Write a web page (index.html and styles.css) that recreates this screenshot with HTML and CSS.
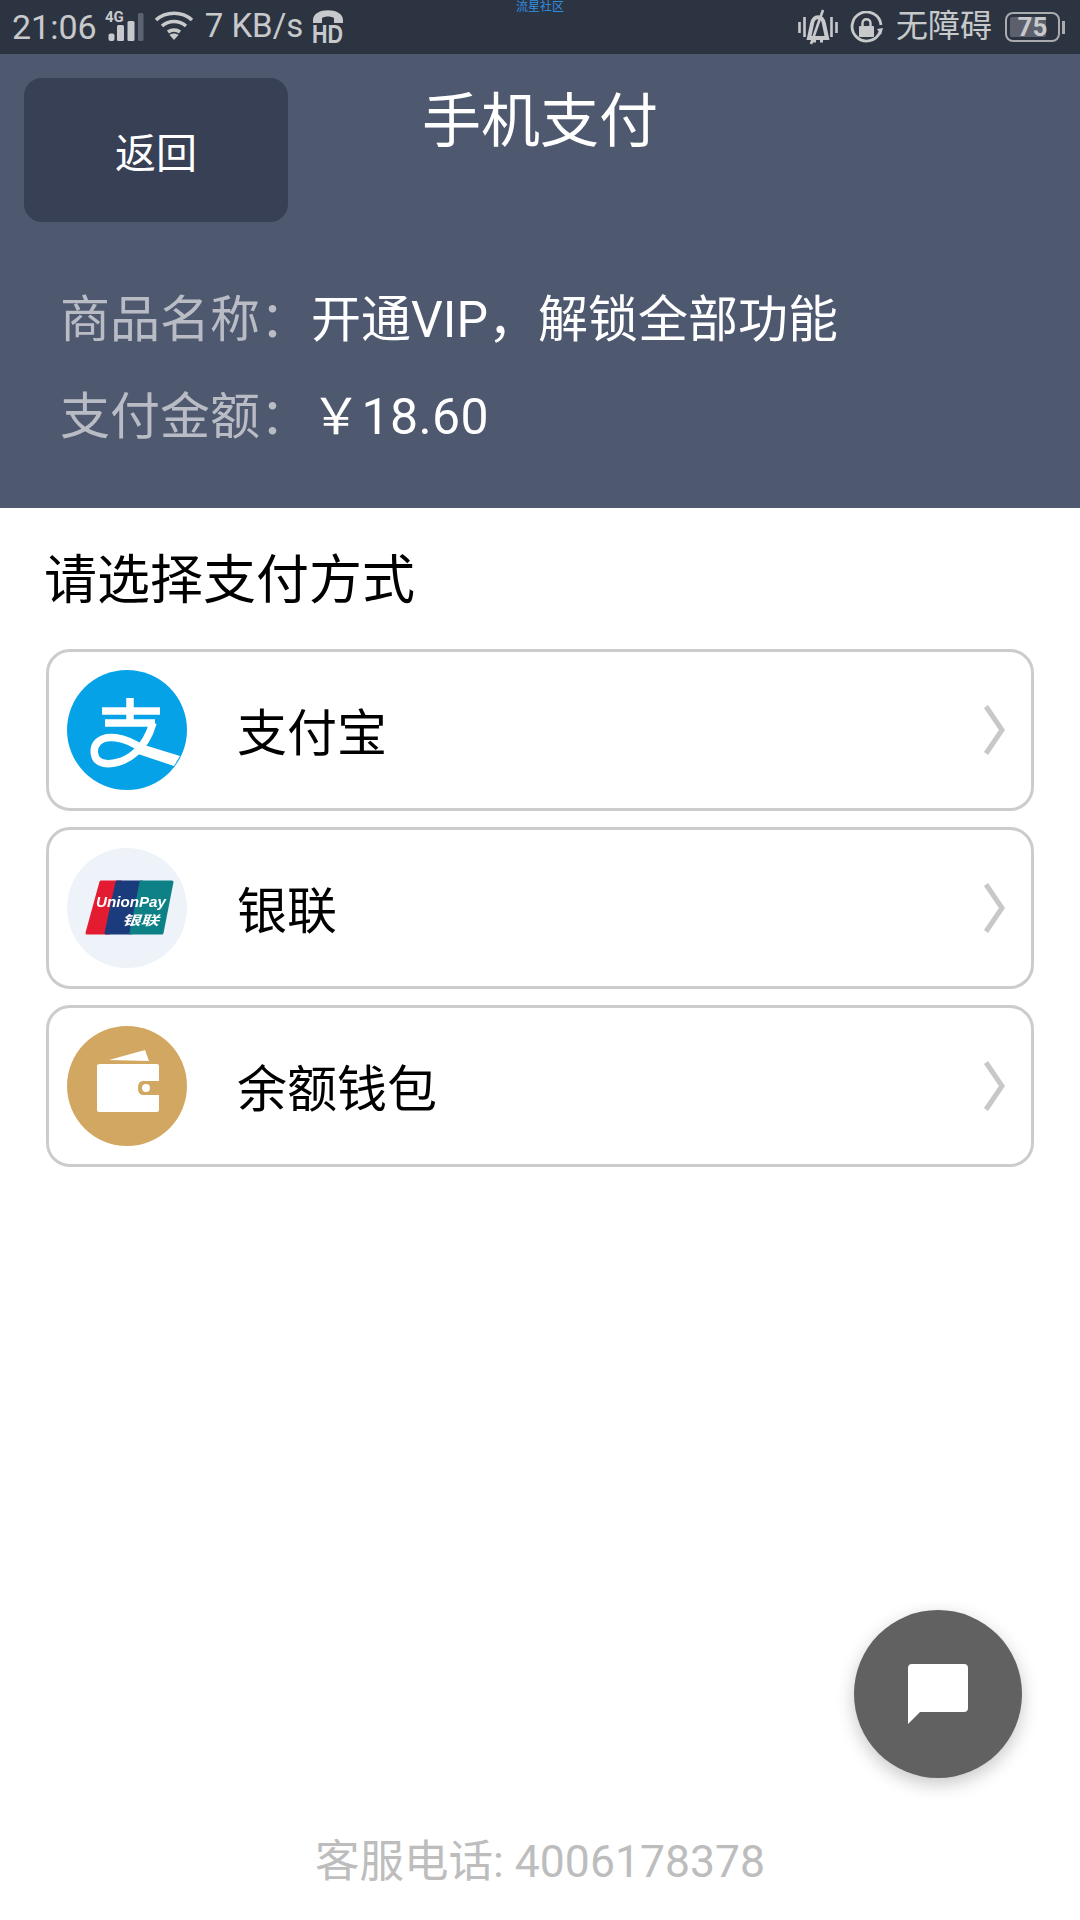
FILE: index.html
```html
<!DOCTYPE html>
<html lang="zh">
<head>
<meta charset="utf-8">
<title>手机支付</title>
<link rel="stylesheet" href="styles.css">
</head>
<body>
<div class="page">
  <div class="status">
    <div class="status-group">
      <span class="time">21:06</span>
      <svg class="ic-signal" viewBox="0 0 40 32" width="40" height="32"><text x="0" y="12" class="net">4G</text><rect x="3.500" y="23.500" width="6" height="7.500" rx="2" fill="#c8c9cb"/><rect x="12" y="15" width="7" height="16" rx="1.500" fill="#c8c9cb"/><rect x="22.500" y="11" width="7" height="20" rx="1.500" fill="#c8c9cb"/><rect x="33" y="3" width="5.500" height="28" rx="1.500" fill="#5d6370"/></svg>
      <svg class="ic-wifi" viewBox="0 0 40 32" width="40" height="32" fill="none" stroke="#c8c9cb" stroke-width="3.600"><path d="M2 11 C12 2 28 2 38 11"/><path d="M8 17 C15 11 25 11 32 17"/><path d="M14 23 C17.500 20.500 22.500 20.500 26 23"/><path d="M15.500 26 L20 31 L24.500 26 C22 24 18 24 15.500 26Z" fill="#c8c9cb" stroke="none"/></svg>
      <span class="speed">7 KB/s</span>
      <svg class="ic-hd" viewBox="0 0 32 34" width="32" height="34"><path d="M1 10 C1 -3 31 -3 31 10 L31 13 L22 13 L22 8 C19 6 13 6 10 8 L10 13 L1 13Z" fill="#c8c9cb"/><text x="0" y="33" class="hd" textLength="31" lengthAdjust="spacingAndGlyphs">HD</text></svg>
    </div>
    <span class="brand">流星社区</span>
    <div class="status-group right">
      <svg class="ic-bell" viewBox="0 0 40 36" width="40" height="36" fill="none" stroke="#c8c9cb"><path d="M1.500 13 V24 M6.500 8 V28 M33.500 8 V28 M38.500 13 V24" stroke-width="2.600"/><path d="M11 29 L14 15 C15 6 25 6 26 15 L29 29Z" stroke-width="4"/><path d="M15 32 H18 M22 32 H25" stroke-width="3"/><path d="M25 1 L13 35" stroke-width="2.600"/></svg>
      <svg class="ic-lock" viewBox="0 0 33 33" width="33" height="33" fill="none"><path d="M30 21 A14.500 14.500 0 1 1 31 14" stroke="#c8c9cb" stroke-width="2.800"/><path d="M27 18 L31 24 L33 17Z" fill="#c8c9cb"/><rect x="9" y="15" width="15" height="11" rx="1" fill="#c8c9cb"/><path d="M12.500 15 V12 C12.500 7 20.500 7 20.500 12 V15" stroke="#c8c9cb" stroke-width="2.400"/></svg>
      <span class="a11y">无障碍</span>
      <div class="battery"><div class="battery-body"><div class="battery-fill"></div><span class="battery-num">75</span></div><div class="battery-tip"></div></div>
    </div>
  </div>

  <header class="hero">
    <div class="hero-top">
      <button class="back">返回</button>
      <h1 class="title">手机支付</h1>
      <span class="spacer"></span>
    </div>
    <div class="info"><span class="label">商品名称：</span><span class="value">开通VIP，解锁全部功能</span></div>
    <div class="info"><span class="label">支付金额：</span><span class="value price">￥18.60</span></div>
  </header>

  <main class="main">
    <h2 class="choose">请选择支付方式</h2>
    <div class="methods">
      <div class="method">
        <svg class="logo" viewBox="0 0 120 120"><defs><clipPath id="c1"><circle cx="60" cy="60" r="60"/></clipPath></defs><circle cx="60" cy="60" r="60" fill="#06a2e8"/><g clip-path="url(#c1)"><g fill="none" stroke="#fff" stroke-width="7.500"><path d="M35 41 H93 M38 53 H88 M63 28 V53"/><path d="M86 53 C82 67 76 76 68 83 C58 92 44 95 36 93 C26 91 25 78 31 72 C38 65 56 65 77 80"/></g><path d="M74 74 L113 86 L107 96 L68 83Z" fill="#fff"/></g></svg>
        <span class="method-name">支付宝</span>
        <svg class="chevron" viewBox="0 0 24 50" width="24" height="50" fill="none"><path d="M3 1.500 L19 25 L3 48.500" stroke="#c8c8c8" stroke-width="5"/></svg>
      </div>
      <div class="method">
        <svg class="logo" viewBox="0 0 120 120"><circle cx="60" cy="60" r="60" fill="#eef2f9"/><g class="logo-soft"><path d="M34 34 H54 L42 85 H20 Z" fill="#e31c32" stroke="#e31c32" stroke-width="3" stroke-linejoin="round"/><path d="M50 34 H75 L64 85 H39 Z" fill="#1a3b7c" stroke="#1a3b7c" stroke-width="3" stroke-linejoin="round"/><path d="M74 34 H105 L95 85 H64 Z" fill="#0d8185" stroke="#0d8185" stroke-width="3" stroke-linejoin="round"/><text x="29" y="59" class="up" textLength="70" lengthAdjust="spacingAndGlyphs">UnionPay</text><text x="55" y="77" class="up-cn" textLength="37" lengthAdjust="spacingAndGlyphs">银联</text></g></svg>
        <span class="method-name">银联</span>
        <svg class="chevron" viewBox="0 0 24 50" width="24" height="50" fill="none"><path d="M3 1.500 L19 25 L3 48.500" stroke="#c8c8c8" stroke-width="5"/></svg>
      </div>
      <div class="method">
        <svg class="logo" viewBox="0 0 120 120"><circle cx="60" cy="60" r="60" fill="#d2a761"/><path d="M42 34 L78 24 L82 35Z" fill="#fff"/><path d="M33 38 H90 Q92 38 92 40 V55 H76 Q71 55 71 62 Q71 69 76 69 H92 V84 Q92 86 90 86 H33 Q30 86 30 84 V40 Q30 38 33 38Z" fill="#fff"/><circle cx="79" cy="62" r="4" fill="#fff"/></svg>
        <span class="method-name">余额钱包</span>
        <svg class="chevron" viewBox="0 0 24 50" width="24" height="50" fill="none"><path d="M3 1.500 L19 25 L3 48.500" stroke="#c8c8c8" stroke-width="5"/></svg>
      </div>
    </div>
  </main>

  <footer class="footer">客服电话: 4006178378</footer>

  <button class="fab" aria-label="消息"><svg viewBox="0 0 60 60" width="60" height="60"><path d="M4 0 H56 Q60 0 60 4 V44 Q60 48 56 48 H12 L0 60 V4 Q0 0 4 0Z" fill="#fff"/></svg></button>
</div>
</body>
</html>
```
FILE: styles.css
```css
* { box-sizing: border-box; }
html, body { margin: 0; padding: 0; }
body {
  width: 1080px;
  height: 1920px;
  background: #fff;
  overflow: hidden;
  font-family: Roboto, "Noto Sans CJK SC", sans-serif;
}
.page {
  position: relative;
  width: 1080px;
  height: 1920px;
  display: flex;
  flex-direction: column;
}

/* status bar */
.status {
  position: relative;
  height: 54px;
  flex: none;
  background: #2c3442;
  color: #c8c9cb;
  display: flex;
  align-items: center;
  justify-content: space-between;
  padding: 0 15px 0 12px;
}
.status-group { display: flex; align-items: center; }
.time { font-size: 34px; line-height: 54px; white-space: nowrap; }
.ic-signal { margin-left: 8px; margin-top: -3px; overflow: visible; }
.net { font: 700 15px Roboto, sans-serif; fill: #c8c9cb; }
.ic-wifi { margin-left: 9px; margin-top: -4px; }
.speed { font-size: 33px; line-height: 54px; margin-left: 11px; margin-top: -3px; white-space: nowrap; }
.ic-hd { margin-left: 9px; overflow: visible; }
.hd { font: 700 26px "Liberation Sans", sans-serif; fill: #c8c9cb; }
.brand {
  position: absolute;
  left: 0;
  right: 0;
  top: 0;
  text-align: center;
  font-size: 12px;
  line-height: 14px;
  color: #2f8fe0;
}
.ic-lock { margin-left: 12px; }
.a11y { font-size: 32px; line-height: 54px; margin-left: 13px; margin-top: -2px; white-space: nowrap; }
.battery { display: flex; align-items: center; margin-left: 13px; }
.battery-body {
  position: relative;
  width: 55px;
  height: 30px;
  border: 2px solid #a9abaf;
  border-radius: 8px;
  padding: 3px;
}
.battery-fill { width: 36px; height: 100%; background: #5b606c; border-radius: 2px; }
.battery-num {
  position: absolute;
  left: 0;
  right: 0;
  top: 0;
  text-align: center;
  font-size: 26px;
  line-height: 26px;
  font-weight: 700;
  color: #c8c9cb;
}
.battery-tip { width: 3px; height: 13px; margin-left: 2px; background: #a9abaf; }

/* hero */
.hero {
  flex: none;
  height: 454px;
  background: #4e586f;
  padding: 24px 0 0 24px;
  color: #fff;
}
.hero-top {
  display: grid;
  grid-template-columns: 264px 1fr 264px;
  margin-right: 24px;
  margin-bottom: 44px;
}
.back {
  height: 144px;
  background: #374054;
  border: 0;
  border-radius: 18px;
  color: #fff;
  font: 41px "Noto Sans CJK SC", sans-serif;
  padding: 0;
}
.title {
  margin: 0;
  text-align: center;
  font-weight: 400;
  font-size: 59px;
  line-height: 88px;
}
.info {
  display: flex;
  align-items: center;
  height: 97px;
  padding-left: 36px;
  font-size: 50px;
  white-space: nowrap;
}
.label { color: #b9bcc4; width: 251px; flex: none; }
.value { color: #fff; }
.price { letter-spacing: .4px; }

/* main */
.main { flex: 1; padding: 33px 46px 0; }
.choose {
  margin: 0 0 28px -2px;
  font-weight: 400;
  font-size: 53px;
  line-height: 80px;
  color: #000;
}
.methods { display: flex; flex-direction: column; gap: 16px; }
.method {
  height: 162px;
  display: flex;
  align-items: center;
  border: 3px solid #ccc;
  border-radius: 24px;
  padding: 0 24px 0 18px;
}
.logo { width: 120px; height: 120px; flex: none; }
.logo-soft { filter: blur(.5px); }
.method-name { flex: 1; margin-left: 50px; padding-bottom: 2px; font-size: 50px; color: #000; }
.chevron { flex: none; }
.up { font: italic 700 15px "Liberation Sans", sans-serif; fill: #fff; }
.up-cn { font: italic 700 13px "Noto Sans CJK SC", sans-serif; fill: #fff; }

/* footer */
.footer {
  flex: none;
  height: 118px;
  text-align: center;
  font-size: 44.500px;
  line-height: 120px;
  color: #bdbdbd;
}
.fab {
  position: absolute;
  left: 854px;
  top: 1610px;
  width: 168px;
  height: 168px;
  border: 0;
  padding: 0;
  border-radius: 50%;
  background: #616161;
  box-shadow: 0 6px 18px rgba(0, 0, 0, .22);
  display: flex;
  align-items: center;
  justify-content: center;
}
```
